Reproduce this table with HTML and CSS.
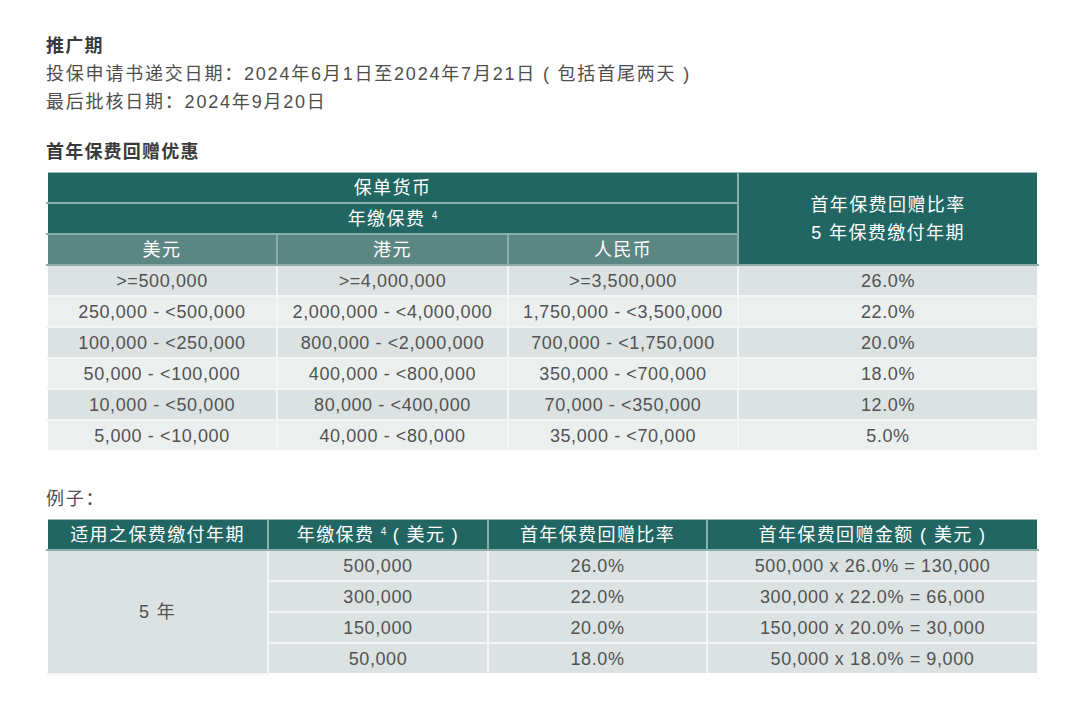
FILE: index.html
```html
<!DOCTYPE html>
<html lang="zh-CN">
<head>
<meta charset="utf-8">
<title>首年保费回赠优惠</title>
<link rel="stylesheet" href="styles.css">
</head>
<body>
<main class="page">
  <section class="intro">
    <h2 class="heading">推广期</h2>
    <p class="line">投保申请书递交日期：2024年6月1日至2024年7月21日 ( 包括首尾两天 )</p>
    <p class="line">最后批核日期：2024年9月20日</p>
  </section>

  <section class="offer">
    <h2 class="heading">首年保费回赠优惠</h2>
    <table class="grid rebate">
      <colgroup>
        <col class="c1"><col class="c2"><col class="c3"><col class="c4">
      </colgroup>
      <thead>
        <tr>
          <th colspan="3">保单货币</th>
          <th rowspan="3" class="rate">首年保费回赠比率<br>5 年保费缴付年期</th>
        </tr>
        <tr>
          <th colspan="3">年缴保费 <sup>4</sup></th>
        </tr>
        <tr class="sub">
          <th>美元</th><th>港元</th><th>人民币</th>
        </tr>
      </thead>
      <tbody>
        <tr class="dark"><td>&gt;=500,000</td><td>&gt;=4,000,000</td><td>&gt;=3,500,000</td><td>26.0%</td></tr>
        <tr class="light"><td>250,000 - &lt;500,000</td><td>2,000,000 - &lt;4,000,000</td><td>1,750,000 - &lt;3,500,000</td><td>22.0%</td></tr>
        <tr class="dark"><td>100,000 - &lt;250,000</td><td>800,000 - &lt;2,000,000</td><td>700,000 - &lt;1,750,000</td><td>20.0%</td></tr>
        <tr class="light"><td>50,000 - &lt;100,000</td><td>400,000 - &lt;800,000</td><td>350,000 - &lt;700,000</td><td>18.0%</td></tr>
        <tr class="dark"><td>10,000 - &lt;50,000</td><td>80,000 - &lt;400,000</td><td>70,000 - &lt;350,000</td><td>12.0%</td></tr>
        <tr class="light"><td>5,000 - &lt;10,000</td><td>40,000 - &lt;80,000</td><td>35,000 - &lt;70,000</td><td>5.0%</td></tr>
      </tbody>
    </table>
  </section>

  <section class="example">
    <p class="line label">例子：</p>
    <table class="grid sample">
      <colgroup>
        <col class="e1"><col class="e2"><col class="e3"><col class="e4">
      </colgroup>
      <thead>
        <tr>
          <th>适用之保费缴付年期</th>
          <th>年缴保费 <sup>4</sup> ( 美元 )</th>
          <th>首年保费回赠比率</th>
          <th>首年保费回赠金额 ( 美元 )</th>
        </tr>
      </thead>
      <tbody>
        <tr class="dark"><td rowspan="4" class="cjk">5 年</td><td>500,000</td><td>26.0%</td><td>500,000 x 26.0% = 130,000</td></tr>
        <tr class="dark"><td>300,000</td><td>22.0%</td><td>300,000 x 22.0% = 66,000</td></tr>
        <tr class="dark"><td>150,000</td><td>20.0%</td><td>150,000 x 20.0% = 30,000</td></tr>
        <tr class="dark"><td>50,000</td><td>18.0%</td><td>50,000 x 18.0% = 9,000</td></tr>
      </tbody>
    </table>
  </section>
</main>
</body>
</html>
```

FILE: styles.css
```css
html, body {
  margin: 0;
  padding: 0;
  background: #ffffff;
}

body {
  font-family: "Liberation Sans", Arial, "Noto Sans CJK SC", sans-serif;
  color: #4a4a4a;
}

.page {
  padding: 32px 43px 20px 46px;
  width: 991px;
}

.heading {
  margin: 0;
  font-size: 18px;
  line-height: 28px;
  font-weight: bold;
  color: #3a3a3a;
  letter-spacing: 1.2px;
}

.line {
  margin: 0;
  font-size: 18px;
  line-height: 28px;
  letter-spacing: 1.8px;
  color: #4d4d4d;
}

.offer {
  margin-top: 22px;
}

.offer .heading {
  margin-bottom: 6px;
}

.example {
  margin-top: 33px;
}

.example .label {
  margin-bottom: 6px;
}

.grid {
  width: 991px;
  table-layout: fixed;
  border-collapse: collapse;
  font-size: 18px;
  letter-spacing: 0.6px;
  text-align: center;
}

.grid th,
.grid td {
  padding: 0;
  height: 29px;
  line-height: 28px;
  vertical-align: middle;
}

.grid th {
  background: #216662;
  color: #ffffff;
  font-weight: normal;
  letter-spacing: 1.4px;
  border: 2px solid #8aaeaa;
}

.grid thead tr:first-child th {
  border-top: 1px solid #9ab9b6;
}

.grid th:first-child,
.grid td:first-child {
  border-left-color: #ffffff;
}

.grid tr > :last-child {
  border-right-color: #ffffff;
}

.grid .sub th {
  background: #5b8682;
}

.grid td {
  color: #525252;
  border: 2px solid #f3f6f6;
}

.grid td.cjk {
  letter-spacing: 1.4px;
}

.grid tbody tr:last-child td {
  border-bottom-color: #ffffff;
}

.grid .dark td {
  background: #dbe2e1;
}

.grid .light td {
  background: #ebf0ef;
}

.grid sup {
  font-size: 10px;
  line-height: 0;
  letter-spacing: 0;
  vertical-align: 6px;
}

.rebate .c1 { width: 230px; }
.rebate .c2 { width: 231px; }
.rebate .c3 { width: 230px; }
.rebate .c4 { width: 300px; }

.sample .e1 { width: 221px; }
.sample .e2 { width: 220px; }
.sample .e3 { width: 219px; }
.sample .e4 { width: 331px; }
```
